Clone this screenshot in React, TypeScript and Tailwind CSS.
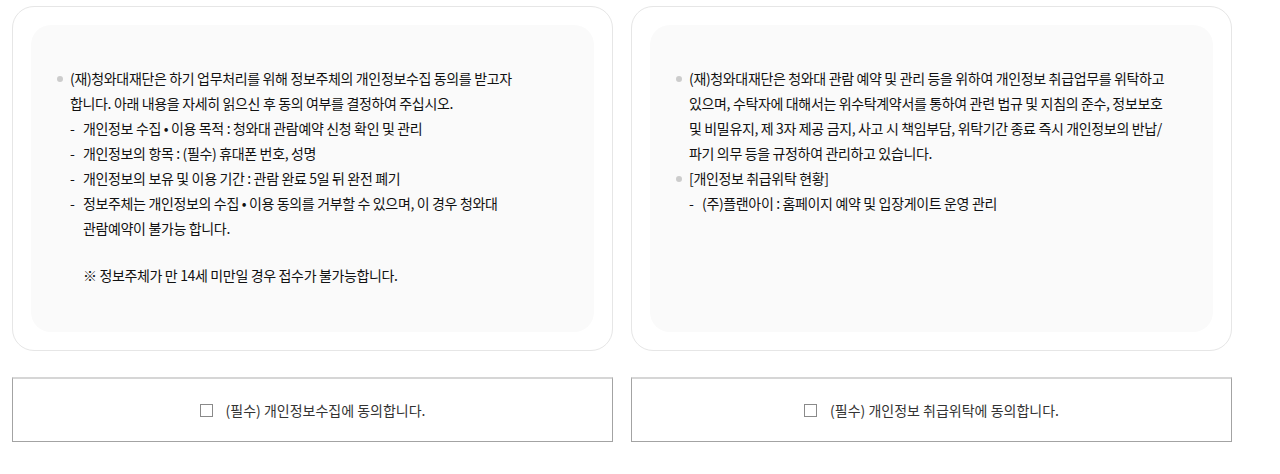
import { useState } from 'react';

const font = { fontFamily: '"Noto Sans CJK KR", "Noto Sans", sans-serif' };

function Bullet({ children }: { children: React.ReactNode }) {
  return (
    <li className="relative pl-[12px]">
      <span className="absolute left-[-1px] top-[10px] w-[6px] h-[6px] rounded-full bg-[#cccccc]" />
      {children}
    </li>
  );
}

function Dash({ children }: { children: React.ReactNode }) {
  return (
    <li className="relative pl-[13px]">
      <span className="absolute left-0 top-0">-</span>
      {children}
    </li>
  );
}

function AgreeBox({ label }: { label: string }) {
  const [checked, setChecked] = useState(false);
  return (
    <label className="flex h-[65px] items-center justify-center gap-[13px] border border-[#a3a3a3] border-t-2 border-t-[#d6d6d6] bg-white cursor-pointer text-[14px] text-[#333]" style={font}>
      <input
        type="checkbox"
        checked={checked}
        onChange={() => setChecked(!checked)}
        className="appearance-none w-[13px] h-[13px] border border-[#8a8a8a] bg-white checked:bg-[#333]"
      />
      <span>{label}</span>
    </label>
  );
}

export default function App() {
  return (
    <div className="bg-white w-[1280px] h-[474px] pt-[6px] pl-[12px]" style={font}>
      <div className="flex gap-[18px]">
        <div className="w-[601px] flex flex-col gap-[26px]">
          <div className="h-[345px] rounded-[22px] border border-[#e6e6e6] p-[18px]">
            <div className="h-full rounded-[20px] bg-[#fafafa] pl-[27px] pt-[41px] text-[14px] leading-[25px] text-[#111] tracking-[-0.35px]">
              <ul>
                <Bullet>
                  (재)청와대재단은 하기 업무처리를 위해 정보주체의 개인정보수집 동의를 받고자
                  <br />
                  합니다. 아래 내용을 자세히 읽으신 후 동의 여부를 결정하여 주십시오.
                  <ul>
                    <Dash>개인정보 수집 • 이용 목적 : 청와대 관람예약 신청 확인 및 관리</Dash>
                    <Dash>개인정보의 항목 : (필수) 휴대폰 번호, 성명</Dash>
                    <Dash>개인정보의 보유 및 이용 기간 : 관람 완료 5일 뒤 완전 폐기</Dash>
                    <Dash>
                      정보주체는 개인정보의 수집 • 이용 동의를 거부할 수 있으며, 이 경우 청와대
                      <br />
                      관람예약이 불가능 합니다.
                    </Dash>
                  </ul>
                  <p className="pl-[13px] mt-[22px]">※ 정보주체가 만 14세 미만일 경우 접수가 불가능합니다.</p>
                </Bullet>
              </ul>
            </div>
          </div>
          <AgreeBox label="(필수) 개인정보수집에 동의합니다." />
        </div>
        <div className="w-[601px] flex flex-col gap-[26px]">
          <div className="h-[345px] rounded-[22px] border border-[#e6e6e6] p-[18px]">
            <div className="h-full rounded-[20px] bg-[#fafafa] pl-[27px] pt-[41px] text-[14px] leading-[25px] text-[#111] tracking-[-0.35px]">
              <ul>
                <Bullet>
                  (재)청와대재단은 청와대 관람 예약 및 관리 등을 위하여 개인정보 취급업무를 위탁하고
                  <br />
                  있으며, 수탁자에 대해서는 위수탁계약서를 통하여 관련 법규 및 지침의 준수, 정보보호
                  <br />
                  및 비밀유지, 제 3자 제공 금지, 사고 시 책임부담, 위탁기간 종료 즉시 개인정보의 반납/
                  <br />
                  파기 의무 등을 규정하여 관리하고 있습니다.
                </Bullet>
                <Bullet>
                  [개인정보 취급위탁 현황]
                  <ul>
                    <Dash>(주)플랜아이 : 홈페이지 예약 및 입장게이트 운영 관리</Dash>
                  </ul>
                </Bullet>
              </ul>
            </div>
          </div>
          <AgreeBox label="(필수) 개인정보 취급위탁에 동의합니다." />
        </div>
      </div>
    </div>
  );
}
